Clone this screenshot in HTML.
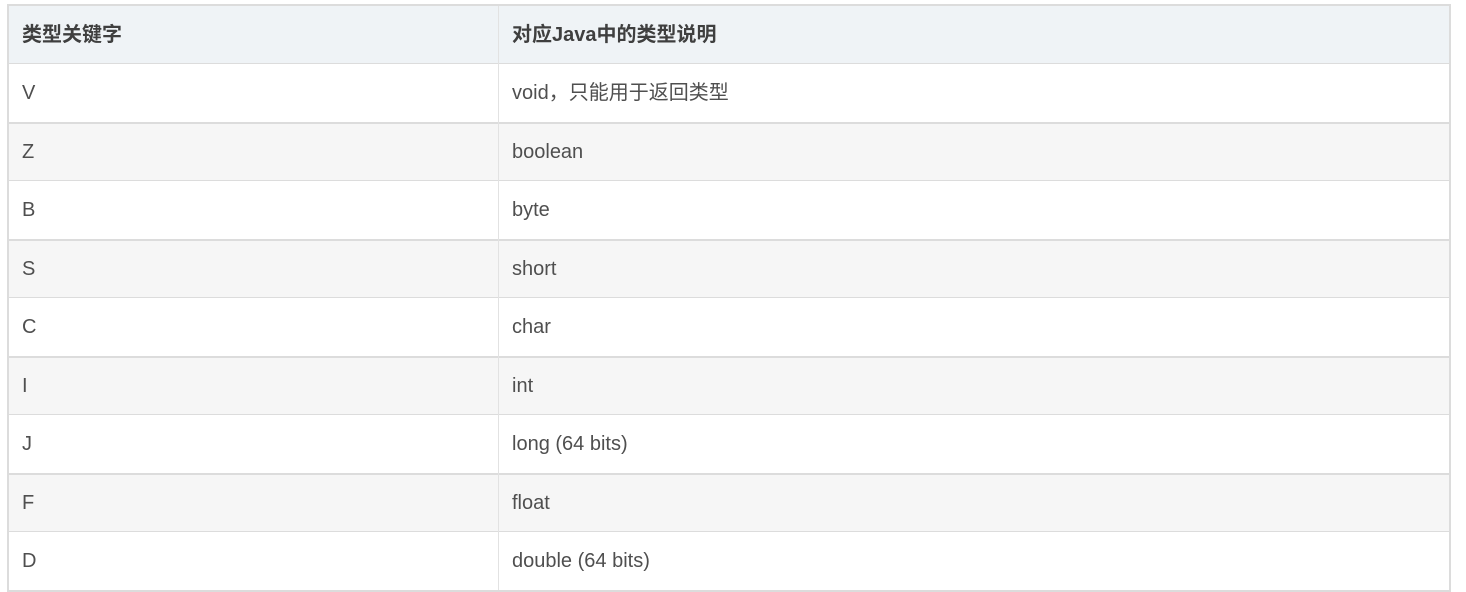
<!DOCTYPE html>
<html><head><meta charset="utf-8"><style>
body{margin:0;background:#fff;width:1466px;height:592px;position:relative;overflow:hidden;font-family:"Liberation Sans","Noto Sans CJK SC",sans-serif;color:#4f4f4f;font-size:20px;line-height:24px}
.t{position:absolute;left:7px;top:4px;width:1440px;height:584px;border:2px solid #dcdcdc;border-bottom-width:2px}
.r{position:absolute;left:0;width:1440px;border-top:2px solid #dcdcdc;box-sizing:border-box}
.c1,.c2{position:absolute;top:0;bottom:0;display:flex;align-items:center;line-height:24px}
.c1{left:13px}.c2{left:503px}
.v{position:absolute;left:489px;top:0;width:1px;height:584px;background:#e2e2e2}
.h{font-weight:bold;color:#3f3f3f}
</style></head><body>
<div class="t">
<div class="r h" style="top:0;height:57px;border-top:0;background:#eff3f6"><div class="c1">类型关键字</div><div class="c2">对应Java中的类型说明</div></div>
<div class="r" style="top:57px;height:59px;background:#fff;border-top-width:1px"><div class="c1">V</div><div class="c2">void，只能用于返回类型</div></div>
<div class="r" style="top:116px;height:58px;background:#f6f6f6"><div class="c1">Z</div><div class="c2">boolean</div></div>
<div class="r" style="top:174px;height:59px;background:#fff;border-top-width:1px"><div class="c1">B</div><div class="c2">byte</div></div>
<div class="r" style="top:233px;height:58px;background:#f6f6f6"><div class="c1">S</div><div class="c2">short</div></div>
<div class="r" style="top:291px;height:59px;background:#fff;border-top-width:1px"><div class="c1">C</div><div class="c2">char</div></div>
<div class="r" style="top:350px;height:58px;background:#f6f6f6"><div class="c1">I</div><div class="c2">int</div></div>
<div class="r" style="top:408px;height:59px;background:#fff;border-top-width:1px"><div class="c1">J</div><div class="c2">long (64 bits)</div></div>
<div class="r" style="top:467px;height:58px;background:#f6f6f6"><div class="c1">F</div><div class="c2">float</div></div>
<div class="r" style="top:525px;height:59px;background:#fff;border-top-width:1px"><div class="c1">D</div><div class="c2">double (64 bits)</div></div>
<div class="v"></div>
</div>
</body></html>
